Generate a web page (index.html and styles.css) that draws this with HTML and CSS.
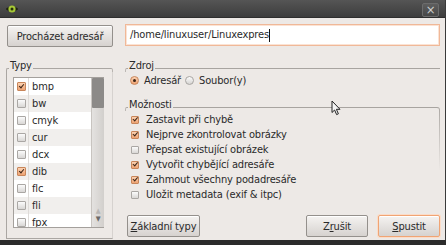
FILE: index.html
```html
<!DOCTYPE html>
<html lang="cs">
<head>
  <meta charset="UTF-8" />
  <title>Dávkové zpracování</title>
  <link rel="stylesheet" href="styles.css">
</head>
<body>
  <div class="window">
    <header class="titlebar">
      <svg class="app-icon" width="12" height="10" viewBox="0 0 12 10">
        <ellipse cx="6" cy="5" rx="6" ry="2.2" fill="#1e2210" />
        <circle cx="6" cy="5" r="3.6" fill="#a6c836" />
        <circle cx="6" cy="5" r="1.5" fill="#27300c" />
      </svg>
      <span class="close">&times;</span>
    </header>

    <main class="content">
      <div class="toprow">
        <button class="btn browse">Procházet adresář</button>
        <div class="path">/home/linuxuser/Linuxexpres<span class="caret"></span></div>
      </div>

      <div class="columns">
        <section class="frame types">
          <div class="frame-title"><span>Typy</span></div>
          <div class="frame-body">
            <div class="list">
              <ul class="rows">
                <li><span class="cell"><span class="check on"></span></span>bmp</li>
                <li><span class="cell"><span class="check"></span></span>bw</li>
                <li><span class="cell"><span class="check"></span></span>cmyk</li>
                <li><span class="cell"><span class="check"></span></span>cur</li>
                <li><span class="cell"><span class="check"></span></span>dcx</li>
                <li><span class="cell"><span class="check on"></span></span>dib</li>
                <li><span class="cell"><span class="check"></span></span>flc</li>
                <li><span class="cell"><span class="check"></span></span>fli</li>
                <li><span class="cell"><span class="check"></span></span>fpx</li>
              </ul>
              <div class="scrollbar">
                <div class="thumb"></div>
                <div class="arrows"><span class="up">&#9650;</span><span class="down">&#9660;</span></div>
              </div>
            </div>
          </div>
        </section>

        <div class="side">
          <section class="frame source">
            <div class="frame-title"><span>Zdroj</span></div>
            <div class="frame-body radios">
              <label class="opt"><span class="radio on"></span>Adresář</label>
              <label class="opt"><span class="radio"></span>Soubor(y)</label>
            </div>
          </section>

          <section class="frame options">
            <div class="frame-title"><span>Možnosti</span></div>
            <div class="frame-body">
              <label class="opt"><span class="check on"></span>Zastavit při chybě</label>
              <label class="opt"><span class="check on"></span>Nejprve zkontrolovat obrázky</label>
              <label class="opt"><span class="check"></span>Přepsat existující obrázek</label>
              <label class="opt"><span class="check on"></span>Vytvořit chybějící adresáře</label>
              <label class="opt"><span class="check on"></span>Zahmout všechny podadresáře</label>
              <label class="opt"><span class="check"></span>Uložit metadata (exif &amp; itpc)</label>
            </div>
          </section>

          <div class="buttons">
            <button class="btn defaults"><u>Z</u>ákladní typy</button>
            <span class="spacer"></span>
            <button class="btn small">Z<u>r</u>ušit</button>
            <button class="btn small default"><u>S</u>pustit</button>
          </div>
        </div>
      </div>
    </main>

    <svg class="pointer" width="11" height="16" viewBox="0 0 11 16">
      <path d="M1 1 L1 12.5 L3.6 10 L5.6 14.6 L7.4 13.8 L5.4 9.3 L9 9.3 Z" fill="#f4f4f4" stroke="#222" stroke-width="1" stroke-linejoin="round" />
    </svg>
  </div>
</body>
</html>
```

FILE: styles.css
```css
body {
  margin: 0;
  background: #2b2b2b;
  font-family: "DejaVu Sans", Verdana, sans-serif;
  font-stretch: condensed;
  font-size: 11px;
  letter-spacing: -0.15px;
  color: #2a2a2a;
}
.window {
  position: relative;
  width: 445px;
  height: 240px;
  background: #ede9e6;
  border-right: 1px solid #3a3a3a;
}
.titlebar {
  height: 18px;
  display: flex;
  align-items: center;
  justify-content: space-between;
  padding: 0 6px 0 6px;
  background: linear-gradient(#555, #3d3d3d);
  border-bottom: 1px solid #2e2e2e;
  box-sizing: border-box;
}
.app-icon {
  margin-top: 1px;
}
.close {
  width: 15px;
  height: 12px;
  margin-top: 2px;
  border: 1px solid #6c6c6c;
  border-radius: 2px;
  background: linear-gradient(#5e5e5e, #474747);
  color: #cfcfcf;
  font-family: "DejaVu Sans", sans-serif;
  font-size: 13px;
  line-height: 12px;
  text-align: center;
}
.content {
  padding: 6px 5px 0 6px;
}
.toprow {
  display: flex;
  align-items: flex-start;
  gap: 12px;
}
.btn {
  font-family: inherit;
  font-stretch: condensed;
  font-size: 11px;
  letter-spacing: -0.15px;
  color: #2a2a2a;
  height: 22px;
  padding: 0;
  border: 1px solid #94908c;
  border-radius: 2px;
  background: linear-gradient(#f5f3f1, #d6d2cf);
  box-shadow: inset 0 1px 0 #fff;
}
.btn u {
  text-decoration-thickness: 1px;
}
.browse {
  width: 106px;
  margin: 1px 0 0 1px;
}
.path {
  flex: 1;
  height: 22px;
  box-sizing: border-box;
  padding: 0 0 0 4px;
  border: 1px solid #f0b898;
  background: #fff;
  box-shadow: inset 0 0 0 1px #fbe3d4;
  line-height: 20px;
  display: flex;
  align-items: center;
}
.caret {
  display: inline-block;
  width: 1px;
  height: 13px;
  background: #111;
}
.columns {
  display: flex;
  gap: 12px;
  margin-top: 12px;
}
.frame-title {
  display: flex;
  height: 13px;
  line-height: 13px;
}
.frame-title span {
  padding: 0 1px;
}
.frame-title::before,
.frame-title::after {
  content: "";
  align-self: flex-end;
  height: 3px;
  border-top: 1px solid #aaa6a2;
}
.frame-title::before {
  width: 2px;
  border-left: 1px solid #aaa6a2;
  border-top-left-radius: 2px;
}
.frame-title::after {
  flex: 1;
}
.types {
  width: 107px;
}
.types .frame-title::after {
  border-right: 1px solid #b8b4b0;
  border-top-right-radius: 2px;
}
.types .frame-body {
  border: 1px solid #aaa6a2;
  border-top: none;
  border-right-color: #d6d2cf;
  padding: 5px 8px 10px 6px;
  height: 151px;
}
.list {
  display: flex;
  height: 151px;
  box-sizing: border-box;
  border: 1px solid #a4a09c;
  border-right: none;
  background: #fff;
  overflow: hidden;
}
.rows {
  list-style: none;
  margin: 0;
  padding: 0;
  flex: 1;
}
.rows li {
  display: flex;
  align-items: center;
  height: 17px;
}
.rows li:nth-child(even) {
  background: #f1efed;
}
.cell {
  width: 14px;
  height: 17px;
  margin-right: 3px;
  border-right: 1px solid #dedbd8;
  display: flex;
  align-items: center;
  justify-content: center;
}
.scrollbar {
  width: 12px;
  display: flex;
  flex-direction: column;
  justify-content: space-between;
  background: linear-gradient(to right, #e4e2e0, #d2cfcc);
  border-left: 1px solid #c8c4c0;
}
.thumb {
  height: 30px;
  background: #8c8a88;
  border-radius: 1px;
}
.arrows {
  display: flex;
  flex-direction: column;
  align-items: center;
  font-size: 7px;
  line-height: 8px;
  padding-bottom: 4px;
}
.up {
  color: #b8b6b4;
}
.down {
  color: #6c6a68;
}
.side {
  flex: 1;
  display: flex;
  flex-direction: column;
}
.source .frame-title::after,
.options .frame-title::after {
  border-top-color: #a8a4a0;
}
.source .frame-title::before,
.options .frame-title::before {
  border-left-color: #bcb8b4;
}
.radios {
  display: flex;
  padding: 2px 0 0 5px;
  gap: 4px;
}
.opt {
  display: flex;
  align-items: center;
  height: 13px;
  gap: 5px;
}
.options {
  margin-top: 11px;
}
.options .frame-title::after {
  border-right: 1px solid #b0aca8;
  border-top-right-radius: 3px;
}
.options .frame-body {
  padding: 1px 0 0 6px;
  background: linear-gradient(#b0aca8, rgba(176, 172, 168, 0)) no-repeat right top / 1px 60px;
}
.options .opt {
  height: 15px;
  gap: 7px;
}
.check {
  position: relative;
  width: 7px;
  height: 7px;
  border: 1px solid #aaa7a4;
  border-radius: 1px;
  background: linear-gradient(#fbfbfb, #d9d7d5);
}
.options .check {
  width: 6px;
  height: 6px;
}
.check.on {
  border-color: #c8865a;
  background: linear-gradient(#fcd2b2, #eda272);
}
.check.on::after {
  content: "";
  position: absolute;
  left: 2px;
  top: 0;
  width: 2px;
  height: 4px;
  border: solid #3a2416;
  border-width: 0 1.5px 1.5px 0;
  transform: rotate(40deg);
}
.options .check.on::after {
  left: 1.5px;
  top: -0.5px;
  width: 1.5px;
  height: 3.5px;
}
.radio {
  position: relative;
  width: 7px;
  height: 7px;
  border: 1px solid #a8a5a2;
  border-radius: 50%;
  background: linear-gradient(#fbfbfb, #d6d4d2);
}
.radio.on {
  border-color: #c8865a;
  background: linear-gradient(#fcd2b2, #eda272);
}
.radio.on::after {
  content: "";
  position: absolute;
  left: 2px;
  top: 2px;
  width: 3px;
  height: 3px;
  border-radius: 50%;
  background: #3a2416;
}
.buttons {
  display: flex;
  gap: 10px;
  margin-top: 13px;
}
.defaults {
  width: 73px;
  margin-left: 2px;
}
.spacer {
  flex: 1;
}
.small {
  width: 62px;
}
.default {
  border-color: #f0a474;
  box-shadow: inset 0 1px 0 #fff, 0 0 0 1px #fbdcc8;
}
.pointer {
  position: absolute;
  left: 331px;
  top: 100px;
}
```
